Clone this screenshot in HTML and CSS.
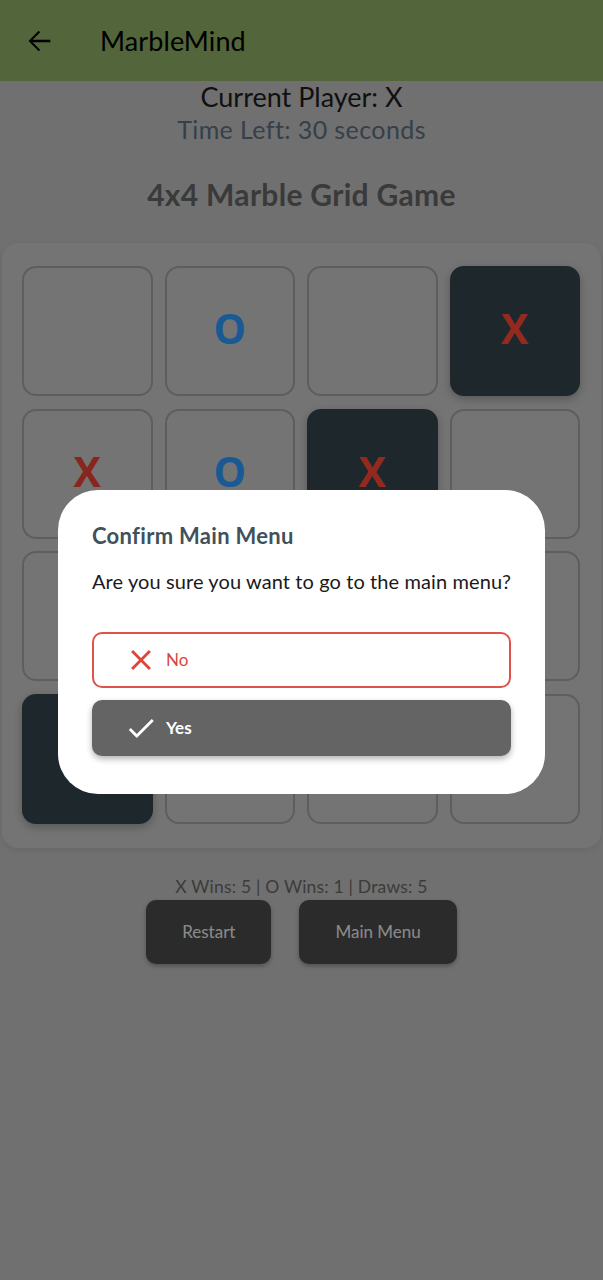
FILE: index.html
```html
<!DOCTYPE html>
<html lang="en">
<head>
<meta charset="utf-8">
<title>MarbleMind</title>
<link rel="stylesheet" href="styles.css">
</head>
<body>
<div class="app">
  <header class="appbar">
    <svg class="back" viewBox="0 0 24 24" width="34" height="34"><path d="M20 11.1H7.5l5.3-5.3-1-1L4.6 12l7.2 7.2 1-1-5.3-5.3H20z"/></svg>
    <h1 class="appbar-title">MarbleMind</h1>
  </header>
  <main class="content">
    <div class="current">Current Player: X</div>
    <div class="time">Time Left: 30 seconds</div>
    <h2 class="game-title">4x4 Marble Grid Game</h2>
    <section class="board">
      <div class="cell"></div>
      <div class="cell o">O</div>
      <div class="cell"></div>
      <div class="cell x win">X</div>
      <div class="cell x">X</div>
      <div class="cell o">O</div>
      <div class="cell x win">X</div>
      <div class="cell"></div>
      <div class="cell"></div>
      <div class="cell x win">X</div>
      <div class="cell"></div>
      <div class="cell"></div>
      <div class="cell x win">X</div>
      <div class="cell"></div>
      <div class="cell"></div>
      <div class="cell"></div>
    </section>
    <div class="score">X Wins: 5 | O Wins: 1 | Draws: 5</div>
    <div class="actions">
      <button class="btn">Restart</button>
      <button class="btn">Main Menu</button>
    </div>
  </main>
</div>
<div class="scrim">
  <div class="dialog">
    <h3 class="dialog-title">Confirm Main Menu</h3>
    <p class="dialog-msg">Are you sure you want to go to the main menu?</p>
    <div class="dialog-actions">
      <button class="dbtn no">
        <svg viewBox="0 0 24 24" width="34" height="34"><path d="M19 6.41L17.59 5 12 10.59 6.41 5 5 6.41 10.59 12 5 17.59 6.41 19 12 13.41 17.59 19 19 17.59 13.41 12z"/></svg>
        <span>No</span>
      </button>
      <button class="dbtn yes">
        <svg viewBox="0 0 24 24" width="34" height="34"><path d="M9 16.17L4.83 12l-1.42 1.41L9 19 21 7l-1.41-1.41z"/></svg>
        <span>Yes</span>
      </button>
    </div>
  </div>
</div>
</body>
</html>
```
FILE: styles.css
```css
* { box-sizing: border-box; }
html, body {
  margin: 0;
  padding: 0;
}
body {
  width: 603px;
  height: 1280px;
  overflow: hidden;
  background: #c1c1c1;
  font-family: Lato, "Noto Sans", sans-serif;
  position: relative;
}
.app {
  height: 1280px;
}
.appbar {
  height: 81px;
  background: #8fae64;
  display: flex;
  align-items: center;
  padding-left: 22px;
}
.back {
  fill: #000;
}
.appbar-title {
  margin: 0 0 0 44px;
  font-size: 27px;
  font-weight: 400;
  letter-spacing: 0.1px;
  color: #000;
}
.content {
  text-align: center;
  display: flex;
  flex-direction: column;
  align-items: center;
}
.current {
  margin-top: 1px;
  font-size: 27px;
  line-height: 30px;
  color: #1d1d1d;
}
.time {
  margin-top: 2px;
  font-size: 25px;
  line-height: 30px;
  letter-spacing: 0.4px;
  color: #5a6e80;
}
.game-title {
  margin: 32px 0 0;
  font-size: 30px;
  line-height: 36px;
  font-weight: 700;
  letter-spacing: 0.3px;
  color: #646464;
}
.board {
  margin-top: 31px;
  width: 599px;
  background: #c8c8c8;
  border-radius: 16px;
  box-shadow: 0 2px 6px rgba(0,0,0,0.08);
  padding: 23px 21px 24px 20px;
  display: grid;
  grid-template-columns: repeat(4, 1fr);
  grid-auto-rows: 130px;
  column-gap: 12px;
  row-gap: 12.5px;
}
.cell {
  border: 2px solid #a2a2a2;
  border-radius: 14px;
  display: flex;
  align-items: center;
  justify-content: center;
  padding-bottom: 6px;
  font-family: "Open Sans", Lato, sans-serif;
  font-weight: 700;
  font-size: 41px;
}
.cell.x { color: #e84232; }
.cell.o { color: #2d9bff; }
.cell.win {
  background: #35454c;
  border-color: #35454c;
  box-shadow: 0 3px 8px rgba(0,0,0,0.25);
  color: #ff4837;
}
.score {
  margin-top: 30px;
  font-size: 17.5px;
  line-height: 18px;
  letter-spacing: 0.2px;
  color: #676767;
}
.actions {
  margin-top: 4px;
  display: flex;
  gap: 28px;
}
.btn {
  height: 64px;
  padding: 0 36px;
  border: none;
  border-radius: 10px;
  background: #4a4a4a;
  color: #eeeeee;
  font-family: Lato, "Noto Sans", sans-serif;
  font-size: 17px;
  box-shadow: 0 2px 4px rgba(0,0,0,0.3);
}
.scrim {
  position: absolute;
  inset: 0;
  background: rgba(0,0,0,0.42);
  display: flex;
  align-items: center;
  justify-content: center;
}
.dialog {
  width: 487px;
  margin-top: 3px;
  background: #fff;
  border-radius: 40px;
  padding: 31px 34px 38px;
}
.dialog-title {
  margin: 0;
  font-size: 22px;
  line-height: 30px;
  font-weight: 700;
  letter-spacing: 0.3px;
  color: #3f515b;
}
.dialog-msg {
  margin: 16px 0 0;
  font-size: 20px;
  line-height: 28px;
  letter-spacing: 0.1px;
  color: #1a1a1a;
  white-space: nowrap;
}
.dialog-actions {
  margin-top: 37px;
  display: flex;
  flex-direction: column;
  gap: 12px;
}
.dbtn {
  height: 56px;
  border-radius: 10px;
  display: flex;
  align-items: center;
  gap: 8px;
  padding: 0 0 0 30px;
  font-family: Lato, "Noto Sans", sans-serif;
  font-size: 17px;
}
.dbtn.no {
  background: #fff;
  border: 2px solid #e0524a;
  color: #d9453c;
}
.dbtn.no svg { fill: #e04438; }
.dbtn.yes {
  background: #646464;
  border: none;
  padding-left: 32px;
  color: #fff;
  font-weight: 700;
  box-shadow: 0 3px 6px rgba(0,0,0,0.3);
}
.dbtn.yes svg { fill: #fff; }
```
